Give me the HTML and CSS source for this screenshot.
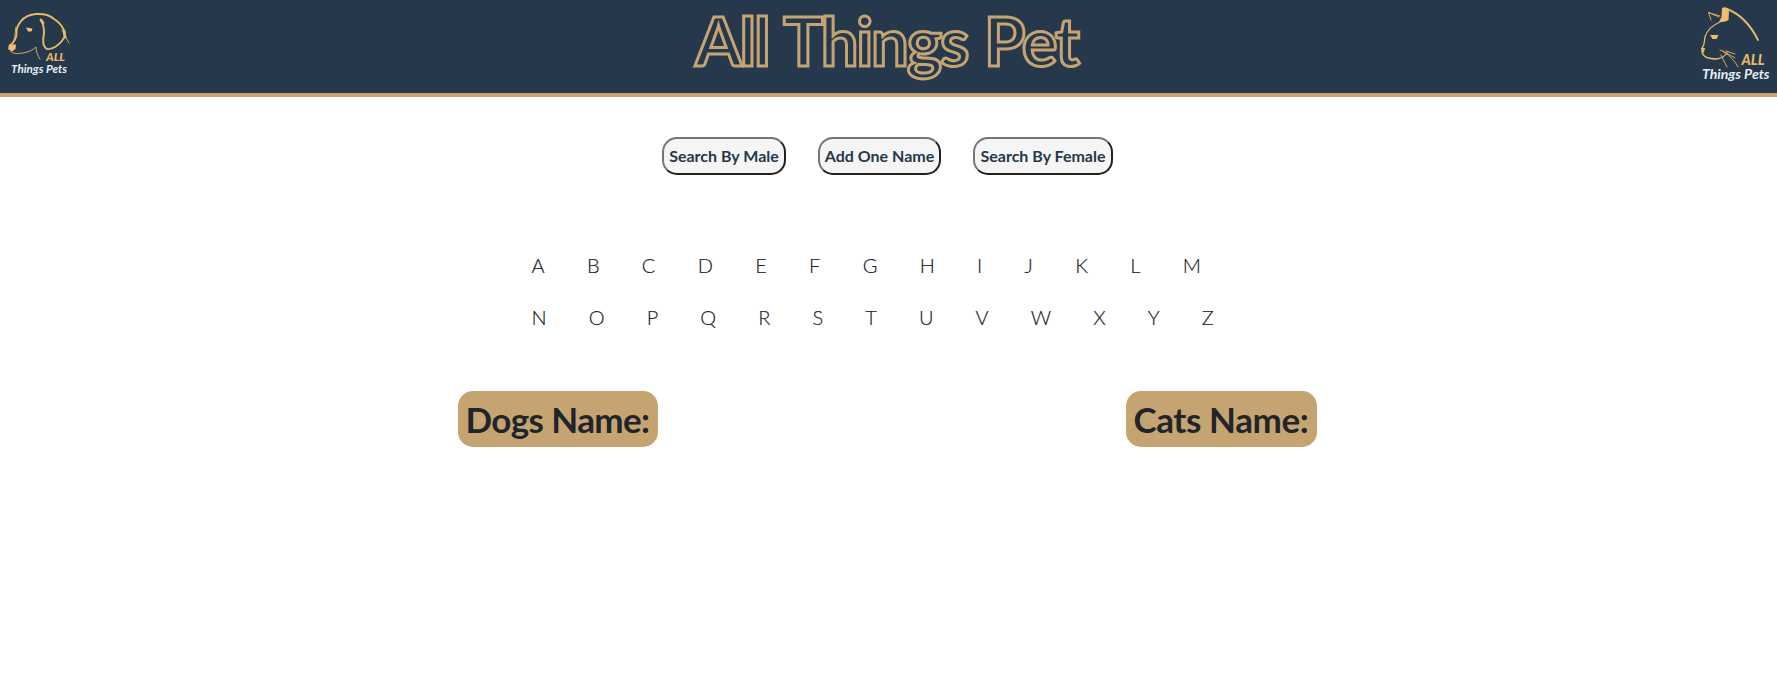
FILE: index.html
```html
<!DOCTYPE html>
<html lang="en">
<head>
<meta charset="utf-8">
<title>All Things Pet</title>
<link rel="stylesheet" href="styles.css">
</head>
<body>
<header class="header">
  <svg class="logo" width="94" height="93" viewBox="0 0 94 93">
    <g class="lines">
      <path d="M10 46C14 42 16.500 38 16.500 34C16 26 22 15 36 14C45 13.500 50 15 54 19C62 24 67 33 64 38C60 45 52 50 47 49C42 46 43 39 44 33C44 27 43 23 41 20"/>
      <path class="thin" d="M16 27C14.500 31 16 36 14 40M10 49C10 54 17 54 23 53C29 52 33 50 36 47C36 52 38 56 40 59M62 30C66 35 66 39 69 43"/>
      <path class="thick" d="M41 20L43 23M64 31L65 37"/>
    </g>
    <path class="fill" d="M9 44.500L16 44.500L15.500 49L12 51.500L8 49ZM26 27.500L32.500 28.500L31.500 31.500L28 31.500Z"/>
    <text class="logo-all" x="46" y="60.5" textLength="19" lengthAdjust="spacingAndGlyphs">ALL</text>
    <text class="logo-name" x="11" y="72.8" textLength="56" lengthAdjust="spacingAndGlyphs">Things Pets</text>
  </svg>
  <h1 class="title">All Things Pet</h1>
  <svg class="logo" width="94" height="93" viewBox="0 0 94 93">
    <g class="lines">
      <path class="medium" d="M37 22C30 25 24 30 22 37C21 42 22 45 19 48M19 52C20 57 26 59 34 59C39 58 42 56 44 53"/>
      <path class="thin" d="M36 17L25.500 12.500L28 20M25.500 12.500L37 16M38 55L44 67M37 50C45 53 52 61 55 67M40 51L52 58M43 51L52 54"/>
      <path d="M44 9C57 14 68 26 75 40"/>
    </g>
    <path class="fill" d="M39 8C43 6 45 8 46 12L45.500 20C42 22 40 22 36 22L38.500 17ZM18 48L22 48L21 52L19 53.500ZM27 35L35.500 35L33.500 39L29.500 39Z"/>
    <text class="logo-all large" x="58.5" y="64.8" textLength="23" lengthAdjust="spacingAndGlyphs">ALL</text>
    <text class="logo-name large" x="19" y="78.6" textLength="67.5" lengthAdjust="spacingAndGlyphs">Things Pets</text>
  </svg>
</header>
<main>
  <div class="actions">
    <button class="action male">Search By Male</button>
    <button class="action add">Add One Name</button>
    <button class="action female">Search By Female</button>
  </div>
  <div class="alphabet">
    <div class="letters first"><span>A</span><span>B</span><span>C</span><span>D</span><span>E</span><span>F</span><span>G</span><span>H</span><span>I</span><span>J</span><span>K</span><span>L</span><span>M</span></div>
    <div class="letters"><span>N</span><span>O</span><span>P</span><span>Q</span><span>R</span><span>S</span><span>T</span><span>U</span><span>V</span><span>W</span><span>X</span><span>Y</span><span>Z</span></div>
  </div>
  <div class="results">
    <h2 class="label dogs">Dogs Name:</h2>
    <h2 class="label cats">Cats Name:</h2>
  </div>
</main>
</body>
</html>
```
FILE: styles.css
```css
* { box-sizing: border-box; }
body { margin: 0; font-family: Lato, sans-serif; color: #212529; background: #fff; }
.header { display: flex; justify-content: space-between; height: 97px; background: #25384c; border-bottom: 4px solid #c6a472; }
.logo { display: block; }
.lines { fill: none; stroke: #e9b766; stroke-width: 1.9; stroke-linecap: round; }
.thin { stroke-width: 0.9; }
.medium { stroke-width: 1.3; }
.thick { stroke-width: 2.8; }
.fill { fill: #f0bd6c; }
.logo-all { fill: #e9b766; font: italic 900 12px Lato, sans-serif; }
.logo-name { fill: #e8edf3; font: italic 700 11.5px Lato, sans-serif; }
.logo-all.large { font-size: 14.5px; }
.logo-name.large { font-size: 14px; }
.title { margin: 1px 4px 0 0; font-size: 67px; line-height: 79px; font-weight: 700; letter-spacing: -2.2px; word-spacing: 2.8px; white-space: nowrap; color: #25384c; -webkit-text-stroke: 3px #c6a472; }
.actions { display: flex; justify-content: center; gap: 32px; margin-top: 40px; padding-right: 2px; }
.action { height: 38px; padding: 0 0 2px; border: 2px solid; border-color: #767676 #212121 #212121 #767676; border-radius: 15px; background: #f5f5f5; color: #25384c; font: 700 16px Lato, sans-serif; white-space: nowrap; }
.male { width: 124px; }
.add { width: 123px; }
.female { width: 140px; }
.alphabet { display: flex; flex-direction: column; gap: 22px; margin: 75px 0 0 531.5px; }
.letters { display: flex; gap: 42.1px; font-size: 20px; line-height: 30px; font-weight: 300; -webkit-text-stroke: 0.2px #212529; }
.letters.first { gap: 42.3px; }
.results { display: flex; justify-content: space-between; margin: 59px 460px 0 458px; }
.label { margin: 0; padding: 8px 0 8px 7.5px; border-radius: 15px; background: #c6a472; font-size: 35px; line-height: 40px; font-weight: 700; letter-spacing: -0.6px; white-space: nowrap; }
.dogs { width: 200px; }
.cats { width: 191px; letter-spacing: -0.4px; }
```
